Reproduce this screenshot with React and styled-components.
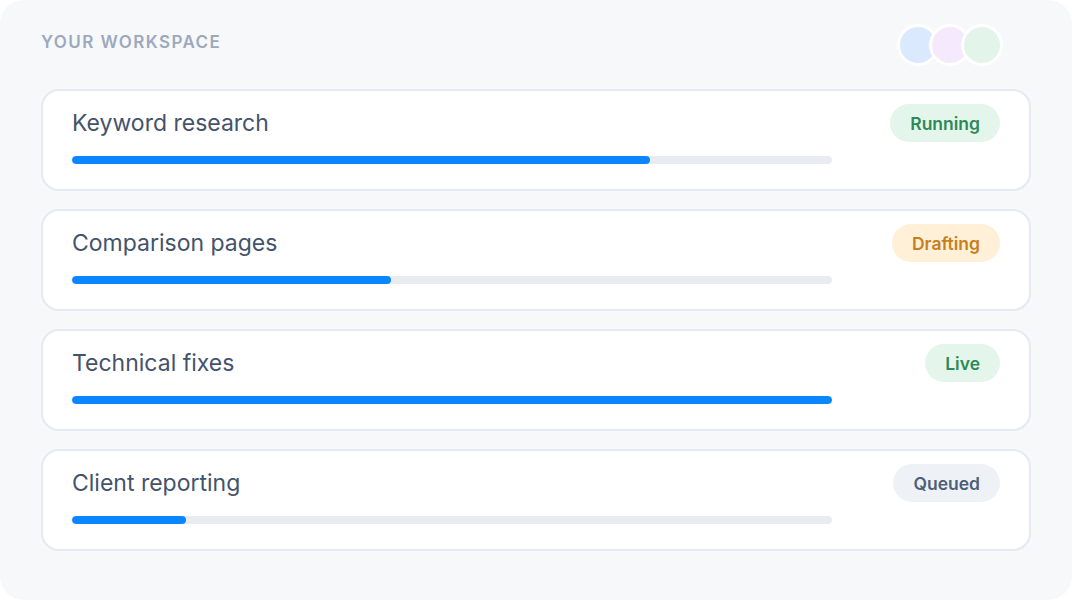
import React from 'react'
import styled, { createGlobalStyle } from 'styled-components'

const Global = createGlobalStyle`
  html, body {
    margin: 0;
    background: #fff;
  }
  body {
    font-family: Inter, "Noto Sans", sans-serif;
    -webkit-font-smoothing: antialiased;
  }
`

const Panel = styled.div`
  box-sizing: border-box;
  width: 1072px;
  height: 600px;
  padding: 24px 41px;
  background: #f7f8fa;
  border-radius: 24px;
`

const Header = styled.div`
  display: flex;
  align-items: center;
  justify-content: space-between;
  height: 42px;
  margin-bottom: 23px;
`

const Label = styled.h2`
  margin: 0 0 6px;
  font-size: 17px;
  font-weight: 600;
  letter-spacing: 1.4px;
  text-transform: uppercase;
  color: #9ca9bd;
`

const Avatars = styled.div`
  display: flex;
  margin-right: 28px;
`

const Avatar = styled.span`
  box-sizing: border-box;
  width: 42px;
  height: 42px;
  border-radius: 50%;
  border: 3px solid #fff;
  background: ${p => p.bg};
  & + & {
    margin-left: -10px;
  }
`

const List = styled.div`
  display: flex;
  flex-direction: column;
  gap: 18px;
`

const Card = styled.div`
  box-sizing: border-box;
  height: 102px;
  padding: 13px 29px 25px;
  background: #fff;
  border: 2px solid #e6e9ef;
  border-radius: 18px;
`

const Row = styled.div`
  display: flex;
  align-items: center;
  justify-content: space-between;
  height: 38px;
`

const Title = styled.h3`
  margin: 0;
  font-size: 23px;
  font-weight: 400;
  color: #44536b;
`

const Badge = styled.span`
  display: inline-flex;
  align-items: center;
  height: 38px;
  padding: 0 20px;
  border-radius: 19px;
  font-size: 17.5px;
  font-weight: 600;
  background: ${p => p.bg};
  color: ${p => p.fg};
`

const Track = styled.div`
  width: 760px;
  height: 8px;
  margin-top: 14px;
  border-radius: 4px;
  background: #e8ebf0;
  overflow: hidden;
`

const Fill = styled.div`
  height: 100%;
  border-radius: 4px;
  background: #0a86ff;
`

const tones = {
  Running: { bg: '#e4f6eb', fg: '#2c8a56' },
  Drafting: { bg: '#fff0d7', fg: '#c67f1c' },
  Live: { bg: '#e4f6eb', fg: '#2c8a56' },
  Queued: { bg: '#eef2f7', fg: '#4f5e78' },
}

const tasks = [
  { name: 'Keyword research', status: 'Running', progress: 76 },
  { name: 'Comparison pages', status: 'Drafting', progress: 42 },
  { name: 'Technical fixes', status: 'Live', progress: 100 },
  { name: 'Client reporting', status: 'Queued', progress: 15 },
]

const App = () => (
  <>
    <Global />
    <Panel>
      <Header>
        <Label>Your workspace</Label>
        <Avatars>
          <Avatar bg="#dbe9fe" />
          <Avatar bg="#f5e9fd" />
          <Avatar bg="#e3f5ea" />
        </Avatars>
      </Header>
      <List>
        {tasks.map(t => (
          <Card key={t.name}>
            <Row>
              <Title>{t.name}</Title>
              <Badge bg={tones[t.status].bg} fg={tones[t.status].fg}>
                {t.status}
              </Badge>
            </Row>
            <Track>
              <Fill style={{ width: `${t.progress}%` }} />
            </Track>
          </Card>
        ))}
      </List>
    </Panel>
  </>
)

export default App
